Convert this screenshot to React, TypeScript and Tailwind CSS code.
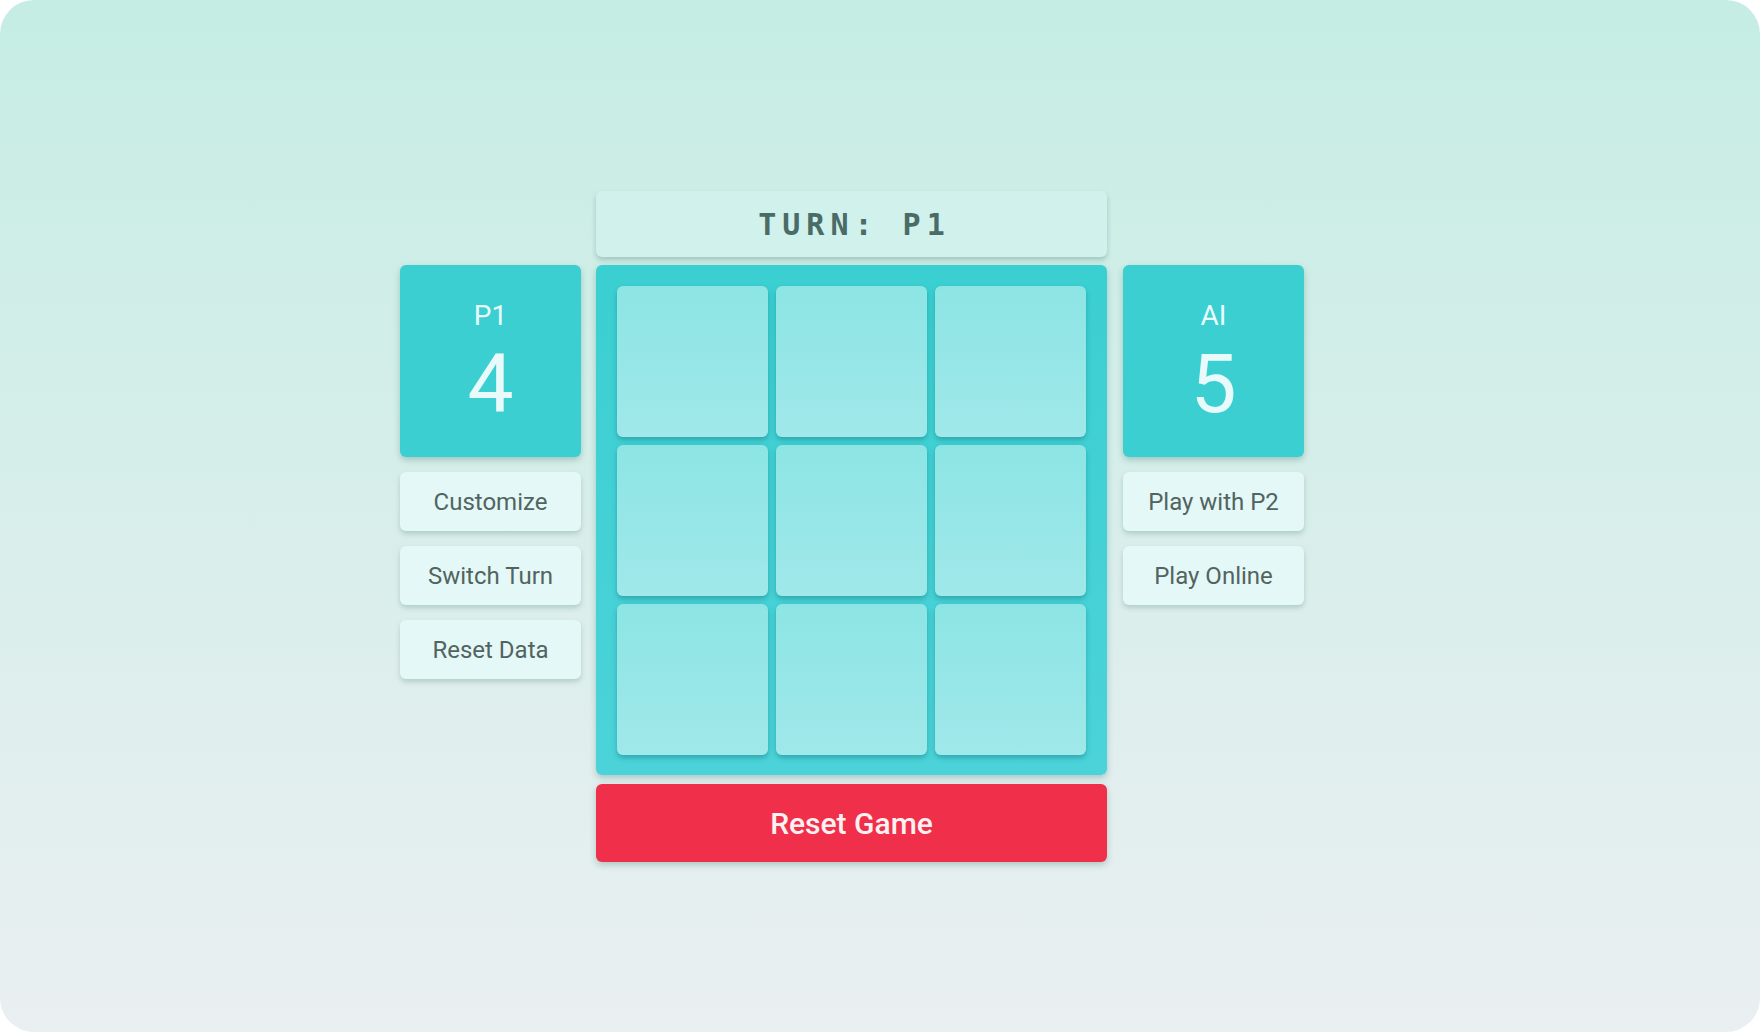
import React from 'react'

const SideButton: React.FC<{ label: string }> = ({ label }) => (
  <button className="h-[59px] w-full rounded-[6px] bg-[#e4f8f7] text-[24px] text-[#52645f] shadow-[0_3px_5px_rgba(60,110,105,0.25)]">
    {label}
  </button>
)

const ScoreCard: React.FC<{ name: string; score: number }> = ({ name, score }) => (
  <div className="flex h-[192px] w-full flex-col items-center rounded-[6px] bg-[#3bcfd2] pt-[31px] text-[#e8fbfa] shadow-[0_3px_6px_rgba(40,110,110,0.3)]">
    <div className="text-[28px] leading-[40px]">{name}</div>
    <div className="mt-[4px] text-[82px] leading-[88px]">{score}</div>
  </div>
)

const App: React.FC = () => {
  const cells = Array.from({ length: 9 }, (_, i) => i)

  return (
    <div className="h-[1032px] w-[1760px] bg-white" style={{ fontFamily: 'Roboto, "Liberation Sans", sans-serif' }}>
      <div className="h-full w-full rounded-[34px] bg-gradient-to-b from-[#c5ede3] to-[#eaeff1] pl-[400px] pt-[191px]">
        <div className="flex items-start gap-[15px]">
          {/* Left column */}
          <div className="mt-[74px] flex w-[181px] flex-col gap-[15px]">
            <ScoreCard name="P1" score={4} />
            <SideButton label="Customize" />
            <SideButton label="Switch Turn" />
            <SideButton label="Reset Data" />
          </div>

          {/* Center column */}
          <div className="flex w-[511px] flex-col">
            <div className="flex h-[66px] items-center justify-center rounded-[6px] bg-[#d1f1ec] shadow-[0_3px_5px_rgba(60,110,105,0.3)]">
              <span
                className="pl-[6px] text-[30px] font-bold tracking-[6px] text-[#4a6b66]"
                style={{ fontFamily: '"DejaVu Sans Mono", "Liberation Mono", monospace' }}
              >
                TURN:&nbsp;P1
              </span>
            </div>
            <div className="mt-[8px] grid h-[510px] grid-cols-3 gap-[8px] rounded-[6px] bg-gradient-to-b from-[#3acfd1] to-[#4bd3d9] p-[21px] pb-[20px] shadow-[0_3px_6px_rgba(40,110,110,0.3)]">
              {cells.map((c) => (
                <div
                  key={c}
                  className="rounded-[6px] bg-gradient-to-b from-[#8ce5e4] to-[#a0e8ea] shadow-[0_3px_5px_rgba(20,120,125,0.45)]"
                />
              ))}
            </div>
            <button className="mt-[9px] h-[78px] rounded-[6px] bg-[#f02f4b] text-[30px] font-medium text-[#fdf1f2] shadow-[0_3px_6px_rgba(60,110,105,0.3)]">
              Reset Game
            </button>
          </div>

          {/* Right column */}
          <div className="ml-px mt-[74px] flex w-[181px] flex-col gap-[15px]">
            <ScoreCard name="AI" score={5} />
            <SideButton label="Play with P2" />
            <SideButton label="Play Online" />
          </div>
        </div>
      </div>
    </div>
  )
}

export default App
